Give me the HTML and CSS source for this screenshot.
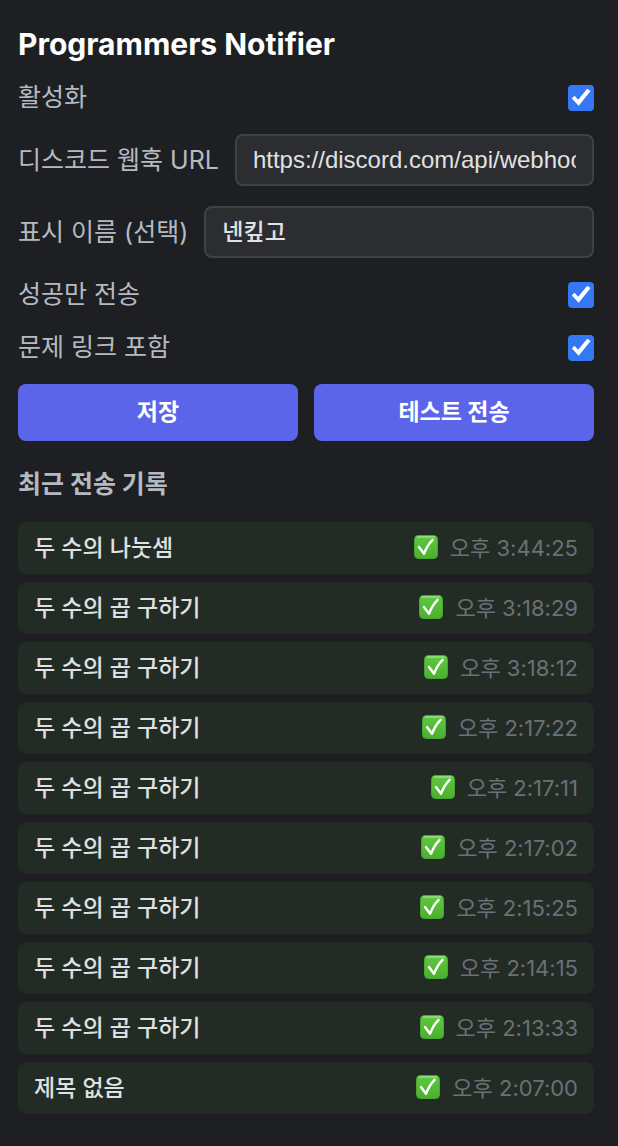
FILE: index.html
```html
<!DOCTYPE html>
<html lang="ko">
<head>
  <meta charset="UTF-8">
  <meta name="viewport" content="width=device-width, initial-scale=1.0">
  <title>Programmers Notifier</title>
  <link rel="stylesheet" href="styles.css">
</head>
<body>
  <svg width="0" height="0" class="defs" aria-hidden="true">
    <defs>
      <linearGradient id="green" x1="0" y1="0" x2="0" y2="1">
        <stop offset="0" stop-color="#8fe07a"/>
        <stop offset="0.14" stop-color="#5cc53f"/>
        <stop offset="1" stop-color="#4caf2f"/>
      </linearGradient>
      <symbol id="ok" viewBox="0 0 24 24">
        <rect x="0.5" y="0.5" width="23" height="23" rx="4" fill="url(#green)" stroke="#47a62c"/>
        <path d="M3.5 2H20.5" stroke="#8fdc7c" stroke-width="1.4" stroke-linecap="round"/>
        <path d="M5 12 L10 18.8 Q13 10.5 18.6 4.8" fill="none" stroke="#fff" stroke-width="2.4" stroke-linejoin="round" stroke-linecap="round"/>
      </symbol>
    </defs>
  </svg>

  <h1>Programmers Notifier</h1>

  <form id="settings">
    <div class="row">
      <label for="enabled">활성화</label>
      <input type="checkbox" id="enabled" checked>
    </div>
    <div class="row">
      <label for="webhook">디스코드 웹훅 URL</label>
      <input type="text" id="webhook" value="https://discord.com/api/webhooks/">
    </div>
    <div class="row">
      <label for="name">표시 이름 (선택)</label>
      <input type="text" id="name" class="korean" value="넨킾고">
    </div>
    <div class="row">
      <label for="successOnly">성공만 전송</label>
      <input type="checkbox" id="successOnly" checked>
    </div>
    <div class="row">
      <label for="includeLink">문제 링크 포함</label>
      <input type="checkbox" id="includeLink" checked>
    </div>
    <div class="actions">
      <button type="button" id="save">저장</button>
      <button type="button" id="test">테스트 전송</button>
    </div>
  </form>

  <h2>최근 전송 기록</h2>
  <ul class="logs">
    <li><span class="name">두 수의 나눗셈</span><span class="time"><svg class="icon" role="img" aria-label="성공"><use href="#ok"/></svg>오후 3:44:25</span></li>
    <li><span class="name">두 수의 곱 구하기</span><span class="time"><svg class="icon" role="img" aria-label="성공"><use href="#ok"/></svg>오후 3:18:29</span></li>
    <li><span class="name">두 수의 곱 구하기</span><span class="time"><svg class="icon" role="img" aria-label="성공"><use href="#ok"/></svg>오후 3:18:12</span></li>
    <li><span class="name">두 수의 곱 구하기</span><span class="time"><svg class="icon" role="img" aria-label="성공"><use href="#ok"/></svg>오후 2:17:22</span></li>
    <li><span class="name">두 수의 곱 구하기</span><span class="time"><svg class="icon" role="img" aria-label="성공"><use href="#ok"/></svg>오후 2:17:11</span></li>
    <li><span class="name">두 수의 곱 구하기</span><span class="time"><svg class="icon" role="img" aria-label="성공"><use href="#ok"/></svg>오후 2:17:02</span></li>
    <li><span class="name">두 수의 곱 구하기</span><span class="time"><svg class="icon" role="img" aria-label="성공"><use href="#ok"/></svg>오후 2:15:25</span></li>
    <li><span class="name">두 수의 곱 구하기</span><span class="time"><svg class="icon" role="img" aria-label="성공"><use href="#ok"/></svg>오후 2:14:15</span></li>
    <li><span class="name">두 수의 곱 구하기</span><span class="time"><svg class="icon" role="img" aria-label="성공"><use href="#ok"/></svg>오후 2:13:33</span></li>
    <li><span class="name">제목 없음</span><span class="time"><svg class="icon" role="img" aria-label="성공"><use href="#ok"/></svg>오후 2:07:00</span></li>
  </ul>
</body>
</html>
```

FILE: styles.css
```css
* {
  box-sizing: border-box;
}
body {
  margin: 0;
  padding: 26px 24px 32px 18px;
  background: #1e1f22;
  color: #e0e1e3;
  font-family: Inter, "Noto Sans CJK KR", sans-serif;
  font-size: 25px;
}
.defs {
  position: absolute;
}
h1 {
  margin: 0 0 19px;
  color: #fff;
  font-size: 30px;
  line-height: 36px;
  font-weight: 700;
}
h2 {
  margin: 28px 0 22px;
  color: #b5bac1;
  font-size: 25px;
  line-height: 31px;
  font-weight: 700;
}
.row {
  display: flex;
  align-items: center;
  justify-content: space-between;
  gap: 16px;
  margin-bottom: 20px;
}
.row label {
  color: #b5bac1;
  line-height: 33px;
  white-space: nowrap;
}
.row input[type="text"] {
  flex: 1;
  min-width: 0;
  height: 52px;
  padding: 0 16px;
  background: #2b2d31;
  border: 2px solid #3f4147;
  border-radius: 8px;
  color: #e0e1e3;
  font-family: "Liberation Sans", "Noto Sans CJK KR", sans-serif;
  font-size: 24px;
}
.row input.korean {
  padding-bottom: 4px;
  font-size: 23px;
  font-weight: 500;
}
.row input[type="checkbox"] {
  appearance: none;
  width: 26px;
  height: 26px;
  margin: 0;
  background: #3478f6;
  border-radius: 4px;
}
.row input[type="checkbox"]:checked::before {
  content: "";
  display: block;
  width: 100%;
  height: 100%;
  background: #fff;
  clip-path: polygon(15% 54%, 25% 43%, 39% 59%, 74% 16%, 87% 25%, 41% 82%);
}
.actions {
  display: flex;
  gap: 16px;
}
.actions button {
  flex: 1;
  height: 57px;
  padding: 0 0 6px;
  background: #5b65ea;
  border: none;
  border-radius: 8px;
  color: #fff;
  font-family: inherit;
  font-size: 23px;
  font-weight: 700;
  cursor: pointer;
}
.logs {
  display: flex;
  flex-direction: column;
  gap: 8px;
  margin: 0;
  padding: 0;
  list-style: none;
}
.logs li {
  display: flex;
  align-items: center;
  justify-content: space-between;
  height: 52px;
  padding: 0 16px 5px;
  background: #232c24;
  border-radius: 8px;
}
.name {
  font-size: 23px;
  font-weight: 500;
}
.time {
  display: flex;
  align-items: center;
  gap: 12px;
  color: #6d6f78;
  font-size: 22px;
}
.icon {
  width: 24px;
  height: 24px;
  margin-top: 3px;
}
```
